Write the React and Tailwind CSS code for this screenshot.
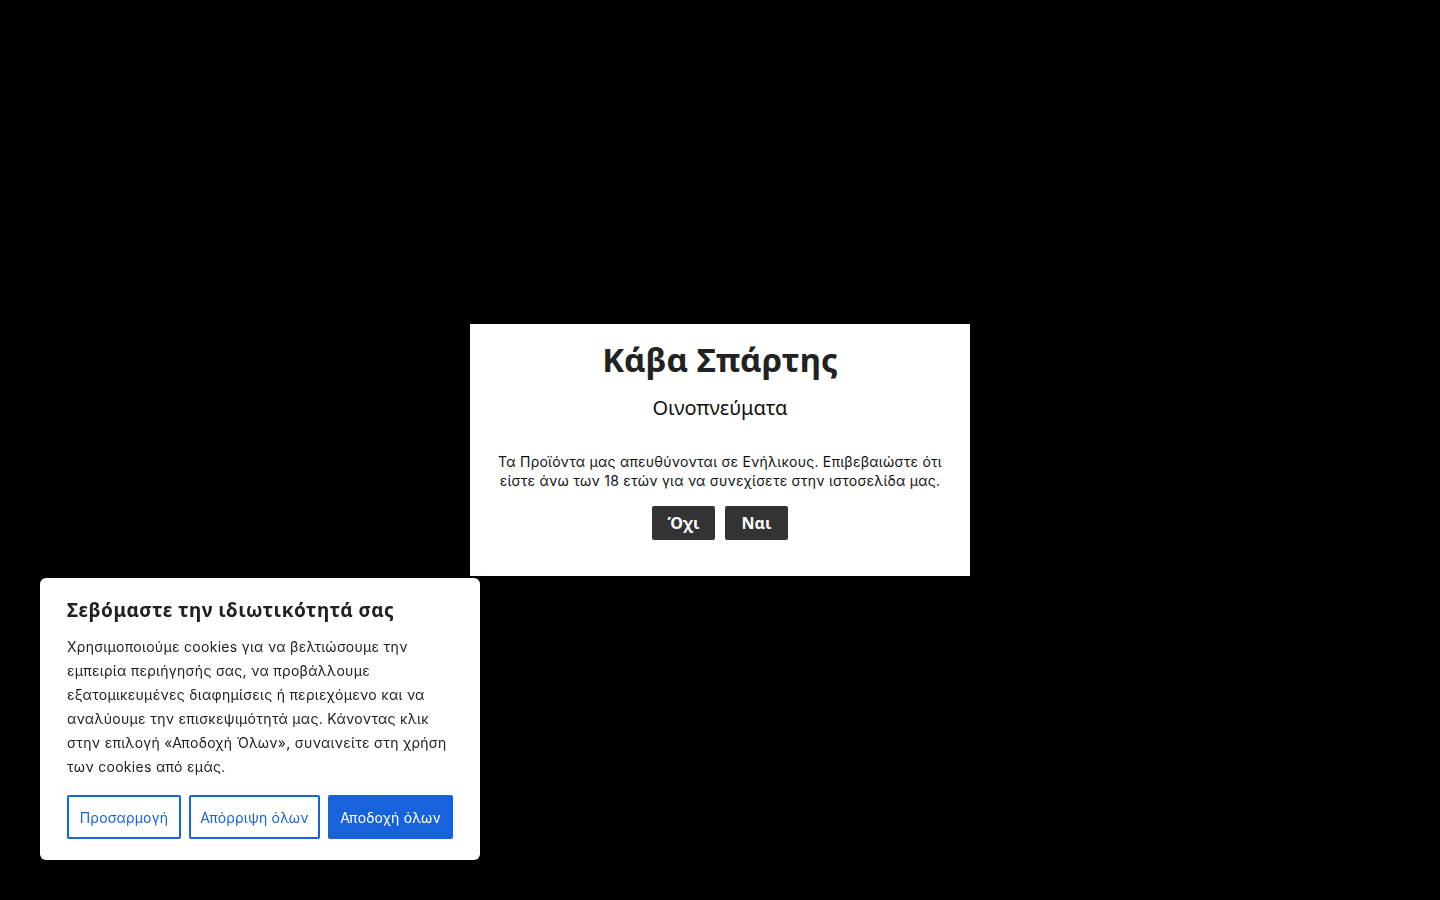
import React from 'react';

export default function App() {
  return (
    <div className="relative min-h-screen w-full bg-black flex items-center justify-center">
      {/* age gate */}
      <div className="w-[500px] h-[252px] bg-white flex flex-col items-center px-[26px] pt-[16px] font-['Noto_Sans',sans-serif] text-[#222]">
        <h1 className="text-[33px] leading-[40px] font-bold">Κάβα Σπάρτης</h1>
        <p className="mt-[14px] text-[20px] leading-[28px] text-[#111]">Οινοπνεύματα</p>
        <p className="mt-[30px] text-center text-[14px] leading-[19px] tracking-[0.25px] text-[#111] font-['Inter',sans-serif]">
          Τα Προϊόντα μας απευθύνονται σε Ενήλικους. Επιβεβαιώστε ότι είστε άνω των 18 ετών για να συνεχίσετε στην ιστοσελίδα μας.
        </p>
        <div className="mt-[16px] flex gap-[10px]">
          <button className="w-[63px] h-[34px] bg-[#333] text-white font-bold text-[16px] rounded-[2px]">Όχι</button>
          <button className="w-[63px] h-[34px] bg-[#333] text-white font-bold text-[16px] rounded-[2px]">Ναι</button>
        </div>
      </div>

      {/* cookie consent */}
      <div className="fixed left-[40px] bottom-[40px] w-[440px] h-[282px] bg-white rounded-[6px] shadow-[0_-1px_10px_rgba(0,0,0,0.1)] px-[27px] pt-[20px] text-[#212121]">
        <h2 className="font-['Noto_Sans',sans-serif] font-bold text-[19px] leading-[24px] tracking-[0.5px]">Σεβόμαστε την ιδιωτικότητά σας</h2>
        <p className="mt-[13px] font-['Inter',sans-serif] text-[14px] leading-[24px] tracking-[0.3px] text-[#212121]">
          Χρησιμοποιούμε cookies για να βελτιώσουμε την εμπειρία περιήγησής σας, να προβάλλουμε εξατομικευμένες διαφημίσεις ή περιεχόμενο και να αναλύουμε την επισκεψιμότητά μας. Κάνοντας κλικ στην επιλογή «Αποδοχή Όλων», συναινείτε στη χρήση των cookies από εμάς.
        </p>
        <div className="mt-[16px] flex gap-[8px] font-['Inter',sans-serif] text-[14px] tracking-[0.2px]">
          <button className="w-[114px] h-[44px] border-2 border-[#1863dc] text-[#1863dc] rounded-[2px]">Προσαρμογή</button>
          <button className="w-[131px] h-[44px] border-2 border-[#1863dc] text-[#1863dc] rounded-[2px]">Απόρριψη όλων</button>
          <button className="w-[125px] h-[44px] border-2 border-[#1863dc] bg-[#1863dc] text-white rounded-[2px]">Αποδοχή όλων</button>
        </div>
      </div>
    </div>
  );
}
